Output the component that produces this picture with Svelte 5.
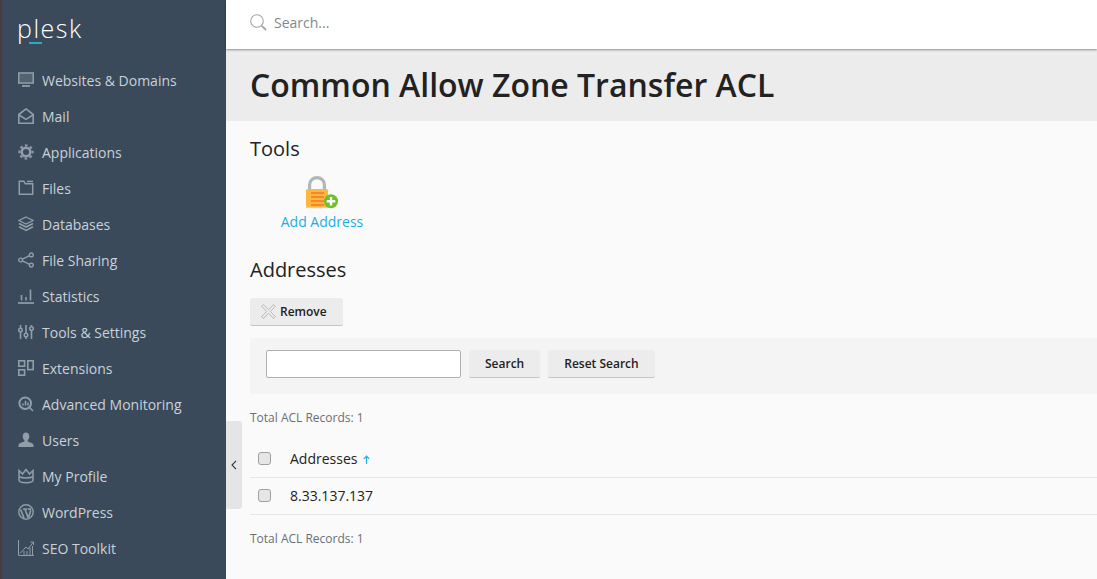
<script lang="ts">
	const navItems = [
		{ label: 'Websites & Domains', icon: 'monitor' },
		{ label: 'Mail', icon: 'mail' },
		{ label: 'Applications', icon: 'gear' },
		{ label: 'Files', icon: 'folder' },
		{ label: 'Databases', icon: 'layers' },
		{ label: 'File Sharing', icon: 'share' },
		{ label: 'Statistics', icon: 'stats' },
		{ label: 'Tools & Settings', icon: 'sliders' },
		{ label: 'Extensions', icon: 'blocks' },
		{ label: 'Advanced Monitoring', icon: 'monitoring' },
		{ label: 'Users', icon: 'user' },
		{ label: 'My Profile', icon: 'crown' },
		{ label: 'WordPress', icon: 'wp' },
		{ label: 'SEO Toolkit', icon: 'seo' }
	];
</script>

<div class="page">
	<aside class="sidebar">
		<div class="logo"><span class="logo-text">plesk</span><span class="logo-dash"></span></div>
		<nav class="nav">
			{#each navItems as item}
				<div class="nav-item">
					<svg class="nav-icon" viewBox="0 0 16 16" width="16" height="16" fill="none" stroke="#919da9" stroke-width="1.4" aria-hidden="true">
						{#if item.icon === 'monitor'}
							<rect x="0.8" y="1" width="14.4" height="10" stroke-width="1.6" />
							<rect x="1.500" y="1.800" width="13" height="8.400" fill="#919da9" fill-opacity="0.3" stroke="none" />
							<path d="M4 14h8" stroke-width="1.800" />
						{:else if item.icon === 'mail'}
							<path d="M.8 6.500 8 .9l7.200 5.600v8.800H.8z" stroke-width="1.600" />
							<path d="M1 7 8 11.400 15 7" stroke-width="1.600" />
						{:else if item.icon === 'gear'}
							<circle cx="8" cy="8" r="4.300" stroke-width="2.600" />
							<circle cx="8" cy="8" r="6.600" stroke-width="2" stroke-dasharray="2.700 2.484" stroke-dashoffset="1.350" />
						{:else if item.icon === 'folder'}
							<path d="M1.300 1.300h4.500l1.600 2.400h7.300v10.600H1.300z" stroke-width="1.500" />
							<path d="M9 1.400h6" stroke-width="1.500" />
						{:else if item.icon === 'layers'}
							<path d="M8 1 15 4.500 8 8 1 4.500z" stroke-width="1.300" />
							<path d="M1 7.500 8 11l7-3.500M1 10.800 8 14.400l7-3.600" stroke-width="1.700" />
						{:else if item.icon === 'share'}
							<circle cx="13.300" cy="2.900" r="1.900" />
							<circle cx="2.600" cy="8" r="1.900" />
							<circle cx="13.300" cy="13.100" r="1.900" />
							<path d="M4.400 7.100 11.600 3.700M4.400 8.900l7.200 3.400" />
						{:else if item.icon === 'stats'}
							<path d="M0 15h16" stroke-width="1.700" />
							<path d="M3.500 12.500V7M8 12.500V9M12.500 12.500V1.500" stroke-width="1.600" />
						{:else if item.icon === 'sliders'}
							<path d="M2.500 1v3M2.500 8v7M8 1v8M8 13v2M13.500 1v1M13.500 7v8" stroke-width="1.600" />
							<circle cx="2.500" cy="6" r="1.800" stroke-width="1.500" />
							<circle cx="8" cy="11" r="1.800" stroke-width="1.500" />
							<circle cx="13.500" cy="4.500" r="1.800" stroke-width="1.500" />
						{:else if item.icon === 'blocks'}
							<rect x="0.800" y="0.800" width="5.800" height="5.400" stroke-width="1.600" />
							<rect x="0.800" y="9.800" width="5.800" height="5.400" stroke-width="1.600" />
							<rect x="9.800" y="0.800" width="5.400" height="8.800" stroke-width="1.600" />
						{:else if item.icon === 'monitoring'}
							<circle cx="7.200" cy="7.200" r="5.800" stroke-width="2" />
							<path d="M11.400 11.400 15 15M5 9.500V7.500M7.500 9.500V4.800M10 9.500V6.500" stroke-width="1.600" />
						{:else if item.icon === 'user'}
							<path d="M8 .5c2 0 3.300 1.500 3.300 3.700 0 1.800-.8 3.300-1.700 4.100v1.300c1.600.8 5.900 1.300 5.900 3.600v1.800H.5v-1.800c0-2.300 4.300-2.800 5.900-3.600V8.300C5.500 7.500 4.700 6 4.700 4.200 4.700 2 6 .5 8 .5z" fill="#919da9" stroke="none" />
						{:else if item.icon === 'crown'}
							<path d="M1 2.500 4.500 6 8 1.500 11.500 6 15 2.500V12c0 1.600-3 2.700-7 2.700S1 13.600 1 12z" stroke-width="1.500" />
							<path d="M1 8.800c3.600 1.500 10.400 1.500 14 0" stroke-width="1.500" />
						{:else if item.icon === 'wp'}
							<circle cx="8" cy="8" r="7.200" stroke-width="1.400" />
							<path d="M2.600 5.500 6 14M5 5h4.500M7 5.200l3.200 8.500M10 5.100h3" stroke-width="1.700" />
							<path d="M12.800 6.200 10.500 13.500" stroke-width="1.700" />
						{:else}
							<path d="M.5 0v15.500H16" stroke-width="1" />
							<path d="M2 13.500 8 7l2 2 5-6.500M12.500 2h3v3" stroke-width="1" />
							<path d="M6 15v-4M9 15v-4M12 15V7.500M14.500 15V6" stroke-width="1" />
						{/if}
					</svg>
					<span>{item.label}</span>
				</div>
			{/each}
		</nav>
	</aside>

	<div class="main">
		<header class="topbar">
			<svg viewBox="0 0 17 17" width="17" height="17" fill="none" aria-hidden="true">
				<circle cx="7" cy="7" r="6.300" stroke="#a5a5a5" stroke-width="1.100" />
				<path d="M11.800 11.800 16 16" stroke="#a5a5a5" stroke-width="1.800" />
			</svg>
			<span class="search-hint">Search...</span>
		</header>

		<div class="title-bar"><h1>Common Allow Zone Transfer ACL</h1></div>

		<section class="content">
			<h2 class="tools-heading">Tools</h2>
			<div class="tool">
				<svg viewBox="0 0 32 33" width="32" height="33" aria-hidden="true">
					<path d="M3.600 14V8.500a7.400 6.900 0 0 1 14.800 0V14" fill="none" stroke="#b0b7bb" stroke-width="3.200" />
					<rect y="13" width="22" height="18" rx="1.500" fill="#fdb73e" />
					<rect y="31" width="22" height="1.200" fill="#cfcfcf" />
					<path d="M5 17h13M5 21h13M5 25h13M5 29h13" stroke="#f0561f" stroke-width="1" />
					<circle cx="25" cy="25.300" r="7" fill="#72bf2e" />
					<path d="M25 21v8.600M20.700 25.300h8.600" stroke="#fff" stroke-width="2.400" />
				</svg>
				<span class="tool-label">Add Address</span>
			</div>

			<h2 class="addresses-heading">Addresses</h2>
			<div class="toolbar">
				<button class="btn remove" type="button">
					<svg viewBox="0 0 16 16" width="15" height="15" fill="#f4f4f4" stroke="#9a9a9a" stroke-width="0.800" aria-hidden="true">
						<path d="M2.500 .8 8 6.200 13.500 .8l1.700 1.700L9.800 8l5.400 5.500-1.700 1.700L8 9.800l-5.500 5.400-1.700-1.700L6.200 8 .8 2.500z" />
					</svg>
					Remove
				</button>
			</div>
			<div class="search-panel">
				<input class="search-input" type="text" />
				<button class="btn" type="button">Search</button>
				<button class="btn" type="button">Reset Search</button>
			</div>

			<p class="records records-top">Total ACL Records: 1</p>

			<div class="row head">
				<span class="check"></span>
				<span>Addresses</span>
				<svg class="sort" viewBox="0 0 7 9" width="7" height="9" fill="none" stroke="#22aee0" stroke-width="1.200" aria-hidden="true">
					<path d="M.8 3.800 3.500 1l2.700 2.800M3.500 1.200V9" />
				</svg>
			</div>
			<div class="row">
				<span class="check"></span>
				<span>8.33.137.137</span>
			</div>
			<p class="records records-bottom">Total ACL Records: 1</p>
		</section>

		<div class="collapse">
			<svg viewBox="0 0 6 10" width="6" height="10" fill="none" stroke="#333" stroke-width="1.100" aria-hidden="true">
				<path d="M5 .8 1 5l4 4.200" />
			</svg>
		</div>
	</div>
</div>

<style>
	:global(body) {
		margin: 0;
		overflow: hidden;
	}

	.page {
		color: #222;
		display: flex;
		font-family: 'Open Sans', sans-serif;
		font-size: 14px;
		height: 579px;
		overflow: hidden;
	}

	.sidebar {
		background: #3a4a5a;
		border-left: 2px solid #4a3a44;
		box-sizing: border-box;
		flex: 0 0 226px;
		padding-left: 16px;
	}

	.logo {
		height: 62px;
		position: relative;
	}

	.logo-text {
		color: #fff;
		display: block;
		font-size: 25px;
		font-weight: 300;
		letter-spacing: 1.5px;
		line-height: 38px;
		margin-left: -1px;
		padding-top: 9px;
	}

	.logo-dash {
		background: #2fa8c6;
		height: 2px;
		left: 11px;
		position: absolute;
		top: 42px;
		width: 13px;
	}

	.nav-item {
		align-items: center;
		color: #c9d1d9;
		display: flex;
		gap: 8px;
		height: 36px;
	}

	.nav-icon {
		flex: none;
	}

	.main {
		background: #fafafa;
		flex: 1;
		min-width: 0;
		position: relative;
	}

	.topbar {
		align-items: center;
		background: #fff;
		box-shadow: 0 1px 2px rgba(0, 0, 0, 0.4);
		box-sizing: border-box;
		display: flex;
		gap: 7px;
		height: 49px;
		padding: 0 0 4px 24px;
		position: relative;
	}

	.search-hint {
		color: #7f8890;
	}

	.title-bar {
		align-items: center;
		background: #ececec;
		box-sizing: border-box;
		display: flex;
		height: 72px;
		padding-left: 24px;
	}

	h1 {
		font-size: 32px;
		font-weight: 600;
		line-height: 1;
		margin: 0;
	}

	.content {
		padding-left: 24px;
	}

	h2 {
		font-size: 20px;
		font-weight: 400;
		line-height: 28px;
		margin: 0;
	}

	.tools-heading {
		padding-top: 14px;
	}

	.tool {
		align-items: center;
		display: flex;
		flex-direction: column;
		margin-top: 13px;
		width: 144px;
	}

	.tool-label {
		color: #1caee4;
		line-height: 19px;
		margin-top: 3px;
	}

	.addresses-heading {
		margin-top: 25px;
	}

	.toolbar {
		margin-top: 14px;
	}

	.btn {
		background: #ececec;
		border: 0;
		border-bottom: 1px solid #c4c4c4;
		border-radius: 2px;
		color: #222;
		font-family: inherit;
		font-size: 12px;
		font-weight: 600;
		height: 28px;
		padding: 0 16px;
	}

	.remove {
		align-items: center;
		display: flex;
		gap: 4px;
		padding: 0 16px 0 11px;
	}

	.search-panel {
		align-items: flex-start;
		background: #f4f4f4;
		box-sizing: border-box;
		display: flex;
		gap: 8px;
		height: 56px;
		margin-top: 12px;
		padding: 12px 0 0 16px;
	}

	.search-input {
		background: #fff;
		border: 1px solid #b0b0b0;
		border-radius: 2px;
		box-sizing: border-box;
		height: 28px;
		margin: 0;
		width: 195px;
	}

	.records {
		color: #6a6f73;
		font-size: 12px;
		line-height: 16px;
		margin: 0;
	}

	.records-top {
		margin-top: 16px;
	}

	.records-bottom {
		margin-top: 16px;
	}

	.row {
		align-items: center;
		border-bottom: 1px solid #e6e6e6;
		box-sizing: border-box;
		display: flex;
		height: 37px;
		padding-bottom: 2px;
	}

	.head {
		margin-top: 15px;
	}

	.check {
		background: #e6e6e6;
		border: 1px solid #a0a0a0;
		border-radius: 3px;
		box-sizing: border-box;
		flex: none;
		height: 13px;
		margin: 0 19px 0 8px;
		width: 13px;
	}

	.sort {
		margin-left: 6px;
		margin-top: 3px;
	}

	.collapse {
		align-items: center;
		background: #e5e5e5;
		border-radius: 0 3px 3px 0;
		display: flex;
		height: 88px;
		justify-content: center;
		left: 0;
		position: absolute;
		top: 421px;
		width: 16px;
	}
</style>
